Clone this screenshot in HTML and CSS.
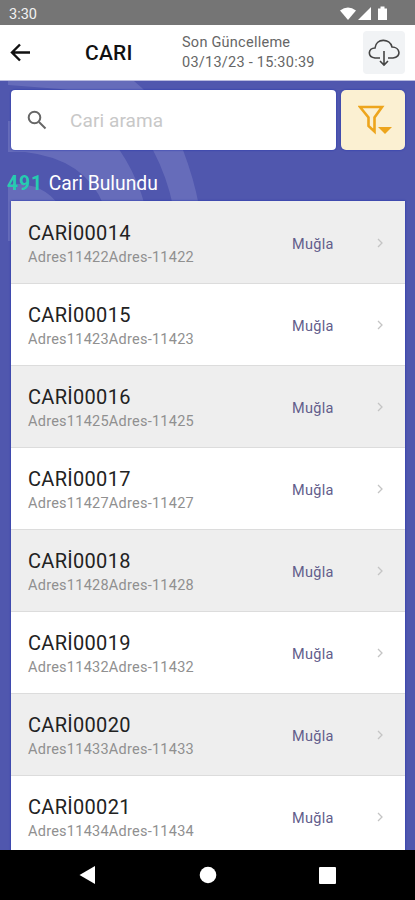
FILE: index.html
```html
<!DOCTYPE html>
<html lang="tr">
<head>
    <meta charset="UTF-8">
    <meta name="viewport" content="width=device-width, initial-scale=1.0">
    <title>Cari</title>
    <link rel="stylesheet" href="styles.css">
</head>
<body>
    <div class="status-bar">
        <span class="clock">3:30</span>
        <svg class="status-icons" width="48" height="16" viewBox="0 0 48 16">
            <path d="M0 4.500Q8 -1.500 16 4.500L8 14Z"/>
            <path d="M18 14L31 1V14Z"/>
            <path d="M38 2.500H40.500V.5H44.500V2.500H47V14H38Z"/>
        </svg>
    </div>

    <header class="header">
        <svg class="back" width="21" height="19" viewBox="0 0 21 19">
            <path d="M20 9.500H2M10 1.500L2 9.500L10 17.500"/>
        </svg>
        <h1>CARI</h1>
        <div class="updated">
            <div>Son Güncelleme</div>
            <div>03/13/23 - 15:30:39</div>
        </div>
        <button class="download">
            <svg width="32" height="28" viewBox="0 0 32 28">
                <path d="M12 19H7C-1 18 0 9 7 9C8 -1 22 -1 24 8C32 8 34 18 25 19H20M16 12V26M12 22L16 26L20 22"/>
            </svg>
        </button>
    </header>

    <main class="content">
        <svg class="waves" width="215" height="160" viewBox="0 0 215 160">
            <path d="M8 0H134Q168 28 183 69Q194 98 199 125H173Q167 96 153 69Q123 14 60 8L8 4Z"/>
            <path d="M8 40H95Q132 76 145 125H104Q86 78 25 71H8Z"/>
            <path d="M8 103Q44 101 59 125H11V160H8Z"/>
        </svg>

        <div class="search-row">
            <div class="search">
                <svg width="20" height="20" viewBox="0 0 20 20">
                    <circle cx="7.500" cy="7.500" r="5.800"/>
                    <path d="M12 12L18.500 18.500"/>
                </svg>
                <span>Cari arama</span>
            </div>
            <button class="filter">
                <svg width="34" height="30" viewBox="0 0 34 30">
                    <path class="funnel" d="M2 2H24L16.500 12.500V26.500L10.500 21V12.500Z"/>
                    <path class="caret" d="M20 22H34L27 29Z"/>
                </svg>
            </button>
        </div>

        <p class="found"><b>491</b> Cari Bulundu</p>

        <div class="list" id="list"></div>
    </main>

    <nav class="nav-bar">
        <svg width="415" height="50" viewBox="0 0 415 50">
            <path d="M79.500 25L95 16V34Z"/>
            <circle cx="208" cy="25" r="8.300"/>
            <rect x="319" y="17" width="17" height="17" rx="1"/>
        </svg>
    </nav>

    <script src="script.js"></script>
</body>
</html>
```
FILE: styles.css
```css
* {
    box-sizing: border-box;
}

body {
    margin: 0;
    height: 900px;
    display: flex;
    flex-direction: column;
    overflow: hidden;
    font-family: Roboto, sans-serif;
    background: #fff;
}

button {
    border: none;
    padding: 0;
}

.status-bar {
    display: flex;
    flex: none;
    align-items: center;
    justify-content: space-between;
    height: 25px;
    padding: 3px 27px 0 9px;
    background: #757575;
    color: #f2f2f2;
    font-size: 14.5px;
}

.status-icons {
    fill: #fff;
}

.header {
    display: flex;
    flex: none;
    align-items: center;
    height: 56px;
    padding: 0 10px;
    border-bottom: 1px solid #b9bbdf;
}

.back {
    fill: none;
    stroke: #111;
    stroke-width: 2.4;
}

h1 {
    width: 97px;
    margin: 0 0 0 54px;
    font-size: 21px;
    font-weight: 500;
    letter-spacing: 0.2px;
    color: #111;
}

.updated {
    flex: 1;
    font-size: 14.5px;
    line-height: 20px;
    letter-spacing: 0.25px;
    color: #666;
    white-space: nowrap;
}

.download {
    display: flex;
    align-items: center;
    justify-content: center;
    width: 42px;
    height: 43px;
    border-radius: 4px;
    background: #f1f3f5;
}

.download svg {
    fill: none;
    stroke: #444;
    stroke-width: 1.6;
}

.content {
    position: relative;
    flex: 1;
    min-height: 0;
    overflow: hidden;
    padding: 9px 10px 0 11px;
    background: #5057ae;
}

.waves {
    position: absolute;
    top: 0;
    left: 0;
    fill: #666cba;
}

.search-row {
    position: relative;
    display: flex;
    gap: 5px;
    height: 60px;
}

.search {
    display: flex;
    flex: 1;
    align-items: center;
    padding-left: 16px;
    border-radius: 4px;
    background: #fff;
    box-shadow: 0 0 2px #1c2fae;
    font-size: 19px;
    letter-spacing: 0.1px;
    color: #c8c8c8;
}

.search svg {
    margin-right: 23px;
    fill: none;
    stroke: #666;
    stroke-width: 2;
}

.filter {
    display: flex;
    align-items: center;
    justify-content: center;
    width: 64px;
    padding-left: 4px;
    border-radius: 5px;
    background: #fbf0d2;
    box-shadow: 0 0 2px #1c2fae;
}

.funnel {
    fill: none;
    stroke: #eda51d;
    stroke-width: 2.6;
}

.caret {
    fill: #eda51d;
}

.found {
    position: relative;
    height: 51px;
    margin: 0 0 0 -4px;
    padding-top: 20px;
    font-size: 19.3px;
    line-height: 27px;
    color: #fff;
}

.found b {
    margin-right: 1px;
    color: #25ccb0;
    letter-spacing: 0.9px;
}

.list {
    position: relative;
    border-top: 1px solid #eee;
    box-shadow: 0 0 2px #1c2fae;
}

.row {
    display: flex;
    align-items: center;
    height: 82px;
    padding: 5px 21px 0 17px;
    border-bottom: 1px solid #dcdcdc;
    background: #fff;
}

.row:nth-child(odd) {
    background: #eee;
}

.info {
    width: 264px;
}

.name {
    font-size: 20px;
    line-height: 25px;
    letter-spacing: 0.3px;
    color: #222;
}

.address {
    font-size: 14.5px;
    line-height: 24px;
    letter-spacing: 0.25px;
    color: #909090;
}

.city {
    flex: 1;
    padding-bottom: 2px;
    font-size: 14.5px;
    letter-spacing: 0.3px;
    color: #625d8b;
}

.chevron {
    margin-bottom: 4px;
    fill: none;
    stroke: #c4c4c4;
    stroke-width: 1.3;
}

.nav-bar {
    flex: none;
    height: 50px;
    background: #000;
}

.nav-bar svg {
    display: block;
    fill: #fff;
}
```
FILE: script.js
```js
const customers = [
    { name: 'CARİ00014', address: 'Adres11422Adres-11422' },
    { name: 'CARİ00015', address: 'Adres11423Adres-11423' },
    { name: 'CARİ00016', address: 'Adres11425Adres-11425' },
    { name: 'CARİ00017', address: 'Adres11427Adres-11427' },
    { name: 'CARİ00018', address: 'Adres11428Adres-11428' },
    { name: 'CARİ00019', address: 'Adres11432Adres-11432' },
    { name: 'CARİ00020', address: 'Adres11433Adres-11433' },
    { name: 'CARİ00021', address: 'Adres11434Adres-11434' }
];

document.getElementById('list').innerHTML = customers.map(customer => `
    <div class="row">
        <div class="info">
            <div class="name">${customer.name}</div>
            <div class="address">${customer.address}</div>
        </div>
        <div class="city">Muğla</div>
        <svg class="chevron" width="8" height="10" viewBox="0 0 8 10">
            <path d="M2 1L6 5L2 9"/>
        </svg>
    </div>
`).join('');
```
